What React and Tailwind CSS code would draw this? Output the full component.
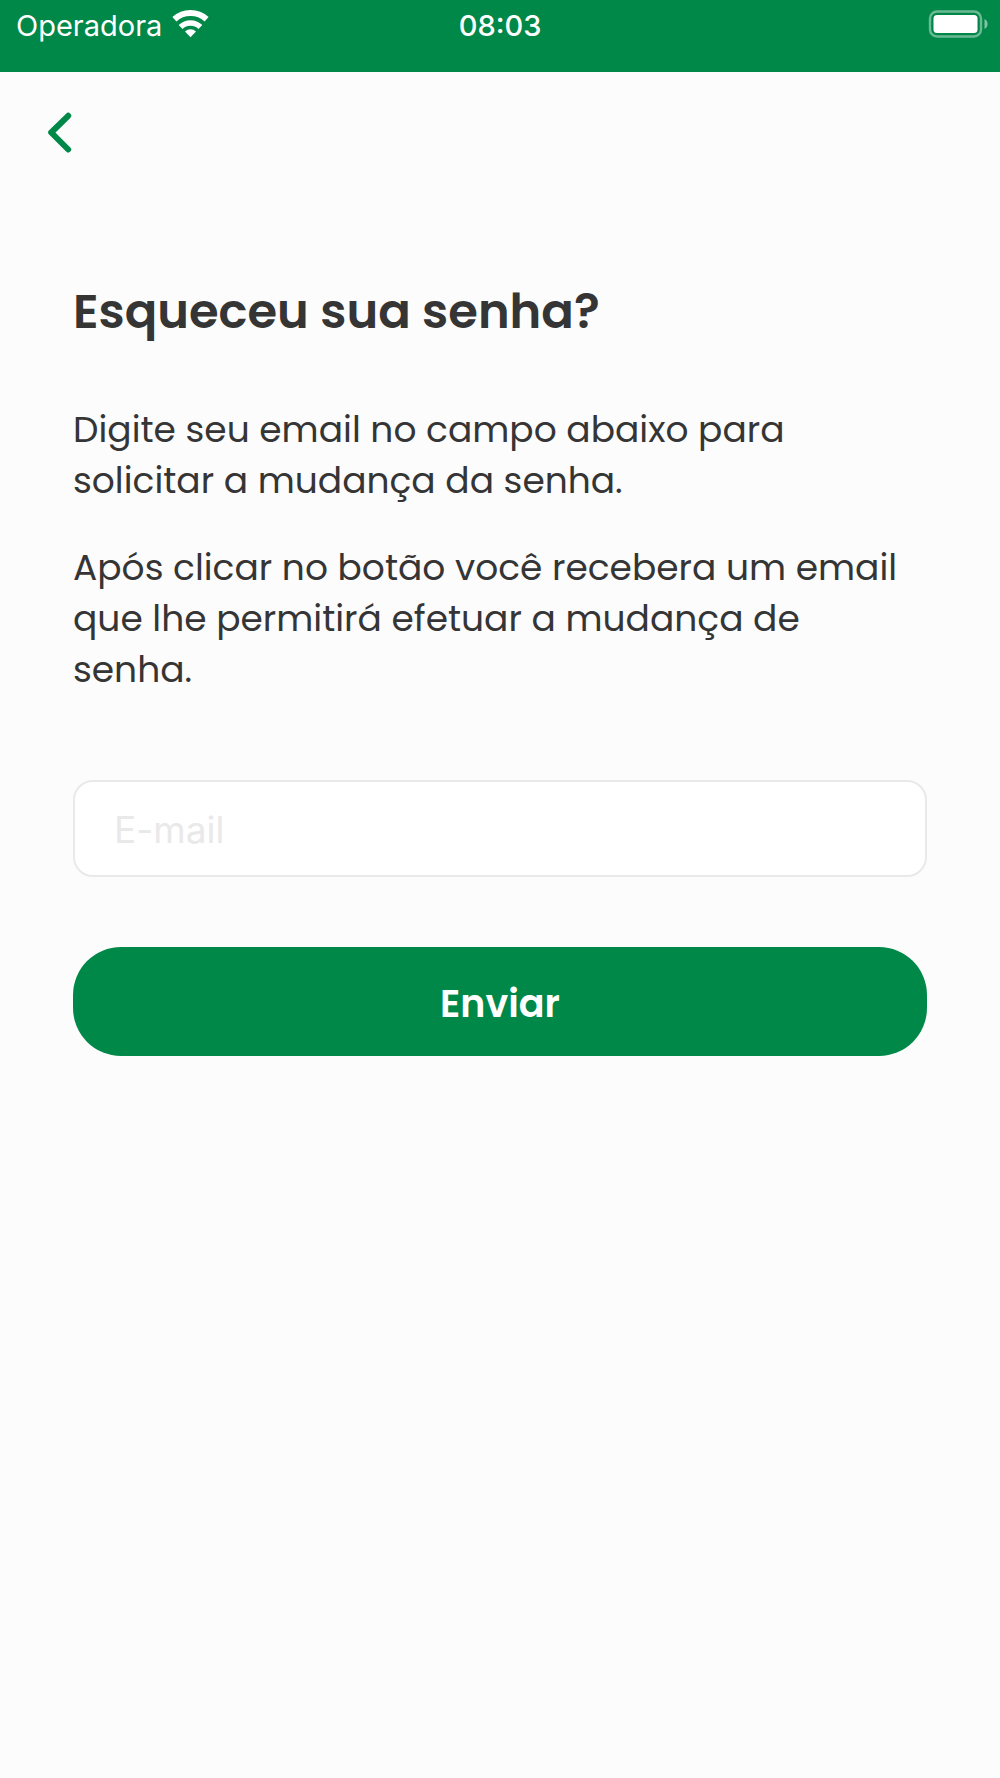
function WifiIcon() {
  return (
    <svg viewBox="0 0 37 28" className="h-7 w-[37px]" fill="none" aria-hidden="true">
      <path d="M2.400 9.300a24 24 0 0 1 32.200 0" stroke="white" strokeWidth="6" />
      <path d="M8.600 17a14.200 14.200 0 0 1 19.800 0" stroke="white" strokeWidth="5.400" />
      <path d="M18.500 27.200 13 21.400a8 8 0 0 1 11 0Z" fill="white" />
    </svg>
  );
}

function BatteryIcon() {
  return (
    <svg viewBox="0 0 60 28" className="h-7 w-[60px]" fill="none" role="img" aria-label="Bateria">
      <rect x="2" y="1.500" width="51" height="25" rx="7" stroke="white" strokeOpacity="0.42" strokeWidth="2.400" />
      <rect x="5.500" y="5" width="44" height="18" rx="3.500" fill="white" />
      <path d="M56.500 9v10a5.600 5.600 0 0 0 0-10Z" fill="white" fillOpacity="0.5" />
    </svg>
  );
}

function StatusBar() {
  return (
    <header className="grid h-[72px] grid-cols-3 items-start bg-[#008849] px-4 pt-1.5 font-['Inter',sans-serif] text-[29px] leading-10 text-white">
      <div className="flex items-start gap-2.5">
        <span>Operadora</span>
        <span className="pt-1">
          <WifiIcon />
        </span>
      </div>
      <time className="text-center font-medium">08:03</time>
      <div className="-mr-1 flex justify-end pt-1">
        <BatteryIcon />
      </div>
    </header>
  );
}

export default function App() {
  return (
    <div className="min-h-screen bg-[#fcfcfc] font-['Poppins','Inter',sans-serif] text-[#353535]">
      <StatusBar />
      <nav className="px-10 pt-10">
        <button type="button" aria-label="Voltar" className="block">
          <svg viewBox="0 0 40 42" className="h-[42px] w-10" fill="none" aria-hidden="true">
            <path
              d="M28.200 3.800 11.200 20.500l17 17"
              stroke="#008849"
              strokeWidth="6"
              strokeLinecap="round"
              strokeLinejoin="round"
            />
          </svg>
        </button>
      </nav>
      <main className="px-[73px] pt-32">
        <h1 className="text-[48px] leading-[60px] font-semibold">Esqueceu sua senha?</h1>
        <div className="mt-[62px] flex flex-col gap-9 text-[36px] leading-[51px]">
          <p>Digite seu email no campo abaixo para solicitar a mudança da senha.</p>
          <p>Após clicar no botão você recebera um email que lhe permitirá efetuar a mudança de senha.</p>
        </div>
        <form className="mt-[85px] flex flex-col gap-[70px]" onSubmit={(e) => e.preventDefault()}>
          <input
            type="email"
            aria-label="E-mail"
            placeholder="E-mail"
            className="h-[97px] w-full rounded-[20px] border-2 border-[#e9e9e9] bg-white px-[39px] pt-0.5 font-['Inter',sans-serif] text-[37px] outline-none placeholder:text-[#e9e9e9]"
          />
          <button
            type="submit"
            className="h-[109px] w-full rounded-[48px] bg-[#008849] pt-1 text-[38px] font-semibold text-white"
          >
            Enviar
          </button>
        </form>
      </main>
    </div>
  );
}
